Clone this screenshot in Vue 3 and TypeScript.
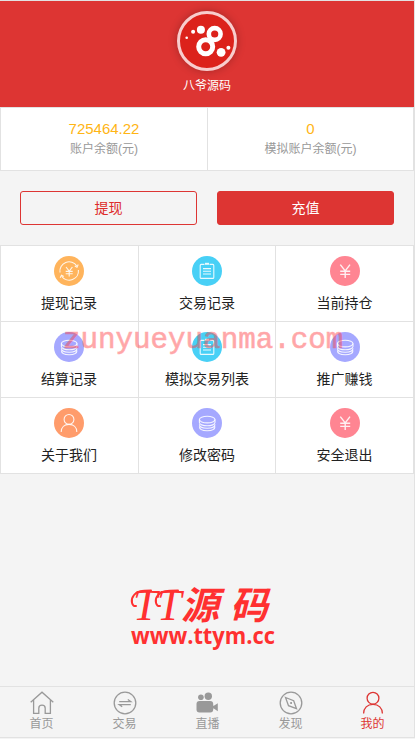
<script setup lang="ts">
type IconName = 'cycle' | 'note' | 'yen' | 'coins' | 'user'

interface MenuItem {
  label: string
  icon: IconName
  tone: string
}

interface TabItem {
  label: string
  icon: string
  active?: boolean
}

const balances = [
  { value: '725464.22', label: '账户余额(元)' },
  { value: '0', label: '模拟账户余额(元)' },
]

const menu: MenuItem[] = [
  { label: '提现记录', icon: 'cycle', tone: 'amber' },
  { label: '交易记录', icon: 'note', tone: 'cyan' },
  { label: '当前持仓', icon: 'yen', tone: 'pink' },
  { label: '结算记录', icon: 'coins', tone: 'violet' },
  { label: '模拟交易列表', icon: 'note', tone: 'cyan' },
  { label: '推广赚钱', icon: 'coins', tone: 'violet' },
  { label: '关于我们', icon: 'user', tone: 'orange' },
  { label: '修改密码', icon: 'coins', tone: 'violet' },
  { label: '安全退出', icon: 'yen', tone: 'pink' },
]

const tabs: TabItem[] = [
  { label: '首页', icon: 'home' },
  { label: '交易', icon: 'trade' },
  { label: '直播', icon: 'live' },
  { label: '发现', icon: 'compass' },
  { label: '我的', icon: 'mine', active: true },
]
</script>

<template>
  <div class="page">
    <header class="profile">
      <div class="avatar">
        <svg viewBox="0 0 60 60">
          <circle cx="37.7" cy="23" r="5.9" class="ring" />
          <circle cx="28.7" cy="35.7" r="7" class="ring thick" />
          <circle cx="23.9" cy="18.7" r="4" />
          <circle cx="16.1" cy="20.8" r="2" />
          <circle cx="9.7" cy="26.7" r="1.3" />
          <circle cx="44.1" cy="41.3" r="4.4" />
          <circle cx="51.4" cy="36.8" r="2" />
        </svg>
      </div>
      <div class="name">八爷源码</div>
    </header>

    <section class="balances">
      <div v-for="b in balances" :key="b.label" class="balance">
        <div class="value">{{ b.value }}</div>
        <div class="caption">{{ b.label }}</div>
      </div>
    </section>

    <div class="actions">
      <button class="btn outline">提现</button>
      <button class="btn solid">充值</button>
    </div>

    <nav class="menu">
      <a v-for="m in menu" :key="m.label" class="cell">
        <span class="badge" :class="m.tone">
          <svg viewBox="0 0 30 30">
            <g v-if="m.icon === 'cycle'">
              <path d="M6 16.5A9.2 9.2 0 0 1 22.8 10M24.4 14A9.2 9.2 0 0 1 7.8 20.4" />
              <path d="M24.2 8.6L23 11.2 20.8 10M6.2 21.8L7.5 19.3 9.8 20.4" />
              <path d="M12 11l3.2 4.2L18.4 11M15.2 15.2v5.3M11.7 15.4h7M11.7 17.8h7" />
            </g>
            <g v-else-if="m.icon === 'note'">
              <path d="M12.5 8.4H9.2a1 1 0 0 0-1 1v12a1 1 0 0 0 1 1h11.6a1 1 0 0 0 1-1v-12a1 1 0 0 0-1-1h-3.3" />
              <path d="M13 7.8h4" class="clip" />
              <path d="M11 12.6h8M11 15.3h8M11 18h8" />
            </g>
            <path v-else-if="m.icon === 'yen'" d="M10.3 8.6l4.9 6.3L20 8.6M15.2 14.9v7M10.2 15.2h10M10.2 18.4h10" class="heavy" />
            <g v-else-if="m.icon === 'coins'">
              <ellipse cx="15.2" cy="11.6" rx="7.8" ry="3.3" />
              <path d="M7.4 11.6v3c0 1.8 3.5 3.2 7.8 3.2s7.8-1.4 7.8-3.2v-3" />
              <path d="M7.4 16.2c0 2.8 3.5 4 7.8 4s7.8-1.2 7.8-4M7.4 18.6c0 2.8 3.5 4.2 7.8 4.2s7.8-1.4 7.8-4.2" />
            </g>
            <g v-else>
              <circle cx="15" cy="11.4" r="4.9" />
              <path d="M7.2 24c0-4.8 3.3-7.6 7.8-7.6s7.8 2.8 7.8 7.6" />
            </g>
          </svg>
        </span>
        <span class="label">{{ m.label }}</span>
      </a>
    </nav>

    <div class="brand">
      <svg viewBox="0 0 170 110">
        <path class="flourish" d="M16 36C12 37 10 30 14 25C17 21 22 20.500 31 20.500M40 36C36 37 34 30 38 25C41 21 47 20.500 58 20.500" />
        <text x="13" y="50" class="script">T</text>
        <text x="37" y="50" class="script">T</text>
        <text x="61" y="49" class="cjk">源</text>
        <text x="110" y="49" class="cjk">码</text>
        <text x="11" y="73.5" class="site" textLength="144" lengthAdjust="spacingAndGlyphs">www.ttym.cc</text>
      </svg>
    </div>

    <footer class="tabs">
      <a v-for="t in tabs" :key="t.label" class="tab" :class="{ active: t.active }">
        <svg viewBox="0 0 24 24">
          <path v-if="t.icon === 'home'" d="M.7 11.2L12 1.2l11.3 10M3.6 9v13.4h5.2v-5.2c0-1.8 1.4-3 3.2-3s3.2 1.2 3.2 3v5.2h5.2V9" />
          <g v-else-if="t.icon === 'trade'">
            <circle cx="12" cy="12" r="10.8" />
            <path d="M6.2 10.6h11.6L14.8 8.4M17.8 13.6H6.2l3 2.2" />
          </g>
          <g v-else-if="t.icon === 'live'" class="filled">
            <circle cx="4.9" cy="6.2" r="2.8" />
            <circle cx="12.3" cy="5.2" r="3.7" />
            <rect x=".5" y="10" width="16.7" height="11.6" rx="3" />
            <path d="M16 14.8h1.8l4-2.6v8l-4-2.6H16z" />
          </g>
          <g v-else-if="t.icon === 'compass'">
            <circle cx="12" cy="12" r="10.8" />
            <path d="M6.5 6.5l8.2 3.2 2.8 8-8-3zM11.2 12h1.8M12.1 11.1v1.8" />
          </g>
          <g v-else>
            <circle cx="12" cy="7.2" r="5.9" />
            <path d="M2.6 22.6c0-5.6 3.8-9.2 9.4-9.2s9.4 3.6 9.4 9.2" />
          </g>
        </svg>
        <span>{{ t.label }}</span>
      </a>
    </footer>

    <div class="watermark">zunyueyuanma.com</div>
  </div>
</template>

<style>
body {
  margin: 0;
  background: #f4f4f4;
}
</style>

<style scoped>
.page {
  position: relative;
  box-sizing: border-box;
  display: flex;
  flex-direction: column;
  width: 415px;
  height: 738px;
  border: solid #e2e2e2;
  border-width: 1px 1px 1px 0;
  background: #f4f4f4;
  font-family: "Liberation Sans", "Noto Sans CJK SC", sans-serif;
  color: #222;
  overflow: hidden;
}
.profile {
  display: flex;
  flex-direction: column;
  align-items: center;
  box-sizing: border-box;
  height: 106px;
  padding-top: 10px;
  background: #dd3533;
}
.avatar {
  box-sizing: border-box;
  width: 60px;
  height: 60px;
  border: 3px solid #f8cdcd;
  border-radius: 50%;
  background: #dc221b;
  box-shadow: 0 0 8px rgba(0, 0, 0, 0.25);
}
.avatar svg {
  display: block;
  width: 60px;
  height: 60px;
  margin: -3px;
  fill: #fff;
}
.avatar .ring {
  fill: none;
  stroke: #fff;
  stroke-width: 4.6;
}
.avatar .thick {
  stroke-width: 5;
}
.name {
  margin-top: 5px;
  font-size: 12px;
  line-height: 20px;
  color: #fff;
}
.balances {
  display: grid;
  grid-template-columns: 208px 206px;
  box-sizing: border-box;
  height: 64px;
  border: solid #e2e2e2;
  border-width: 1px 0;
  background: #fff;
}
.balance {
  box-sizing: border-box;
  padding-top: 12px;
  border-right: 1px solid #e2e2e2;
  text-align: center;
}
.balance:first-child {
  border-left: 1px solid #e2e2e2;
}
.value {
  font-size: 15px;
  line-height: 18px;
  color: #ffb515;
}
.caption {
  margin-top: 1px;
  font-size: 12px;
  line-height: 20px;
  color: #999;
}
.actions {
  display: grid;
  grid-template-columns: 1fr 1fr;
  gap: 20px;
  padding: 20px 20px;
}
.btn {
  height: 34px;
  padding: 0 0 2px;
  border: 1px solid #dd3533;
  border-radius: 3px;
  font-family: inherit;
  font-size: 14px;
}
.outline {
  background: transparent;
  color: #dd2b29;
}
.solid {
  background: #dd3533;
  color: #fff;
}
.menu {
  display: grid;
  grid-template-columns: 138px 137px 137px;
  grid-auto-rows: 76px;
  width: 412px;
  border: solid #e2e2e2;
  border-width: 1px 1px 0;
  background: #fff;
}
.cell {
  display: flex;
  flex-direction: column;
  align-items: center;
  box-sizing: border-box;
  padding-top: 10px;
  border-right: 1px solid #e2e2e2;
  border-bottom: 1px solid #e2e2e2;
}
.cell:nth-child(3n) {
  border-right: 0;
}
.cell:nth-child(3n + 1) {
  padding-right: 1px;
}
.badge {
  width: 30px;
  height: 30px;
  border-radius: 50%;
}
.badge svg {
  display: block;
  fill: none;
  stroke: #fff;
  stroke-opacity: 0.88;
  stroke-width: 1.1;
}
.badge .heavy {
  stroke-width: 1.4;
}
.badge .clip {
  stroke-width: 2;
}
.amber { background: #ffb45c; }
.cyan { background: #48d0f6; }
.pink { background: #ff8592; }
.violet { background: #a5a8ff; }
.orange { background: #ff9c6b; }
.label {
  margin-top: 7px;
  font-size: 14px;
  line-height: 20px;
}
.brand {
  flex: 1;
  padding: 96px 0 0 120px;
}
.brand svg {
  display: block;
  width: 170px;
  height: 110px;
  fill: #ff3030;
}
.script {
  font: italic 44px "Liberation Serif", serif;
}
.flourish {
  fill: none;
  stroke: #ff3030;
  stroke-width: 2;
  stroke-linecap: round;
}
.cjk {
  font: italic 700 38px "Noto Sans CJK SC", sans-serif;
}
.site {
  font: bold 24px "Open Sans", sans-serif;
}
.tabs {
  display: grid;
  grid-template-columns: repeat(5, 83px);
  width: 414px;
  height: 50px;
  border-top: 1px solid #e2e2e2;
}
.tab {
  display: flex;
  flex-direction: column;
  align-items: center;
  padding-top: 4px;
  font-size: 12px;
  line-height: 18px;
  color: #999;
}
.tab:last-child {
  padding-right: 2px;
}
.tab svg {
  width: 24px;
  height: 24px;
  fill: none;
  stroke: currentColor;
  stroke-width: 1.3;
}
.tab .filled {
  fill: currentColor;
  stroke: none;
}
.tab.active {
  color: #dd3533;
}
.watermark {
  position: absolute;
  left: 63px;
  top: 323px;
  font-family: "Liberation Mono", monospace;
  font-size: 29.2px;
  line-height: 34px;
  color: #ff3c41;
  -webkit-text-stroke: 0.6px #ff3c41;
  opacity: 0.45;
  white-space: nowrap;
}
</style>
